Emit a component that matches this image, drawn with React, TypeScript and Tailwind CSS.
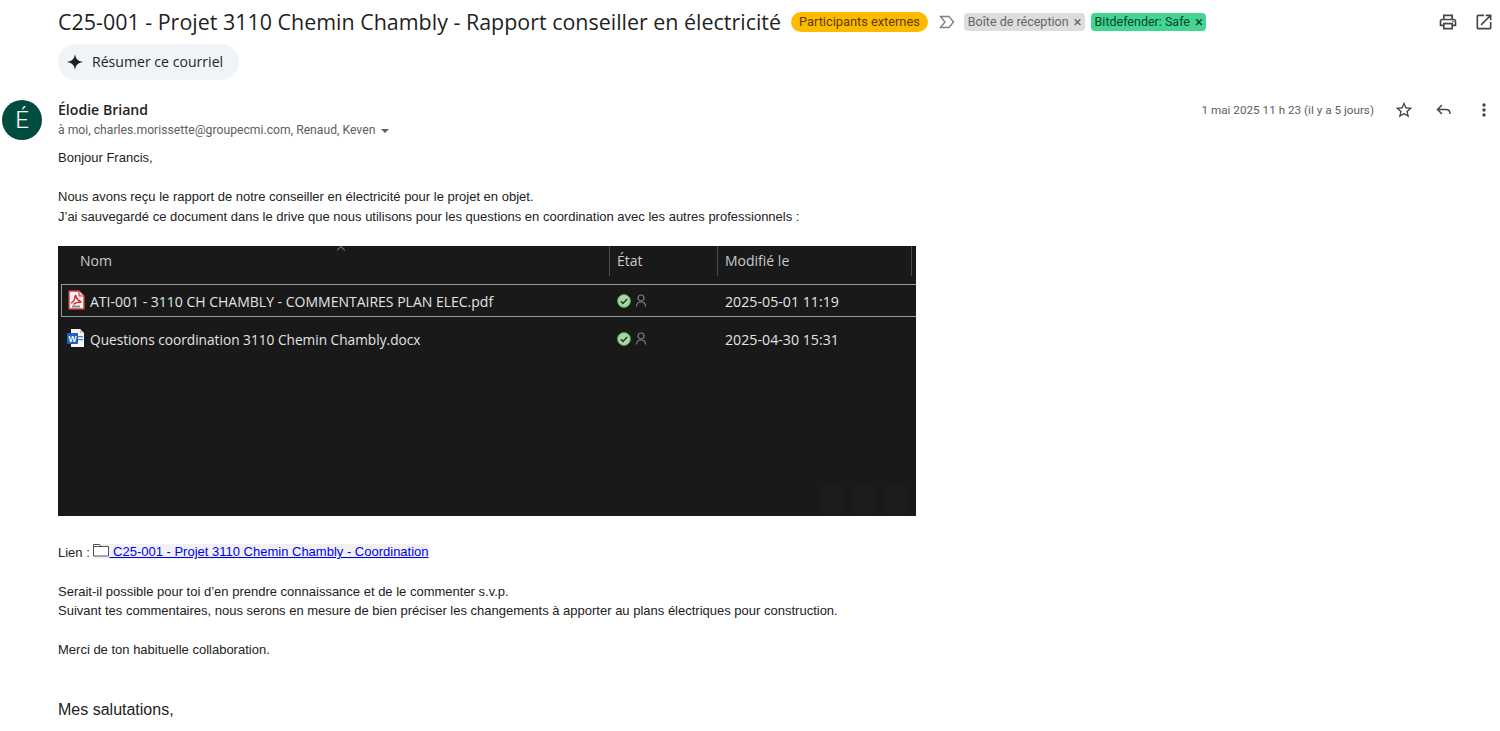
import { MdMoreVert, MdOpenInNew, MdOutlinePrint, MdStarBorder } from "react-icons/md";

function Label({ text, className }: { text: string; className: string }) {
  return (
    <span className={`inline-flex h-[18px] items-center rounded-[4px] pl-[4px] pr-[3px] text-[12.5px] leading-[18px] ${className}`}>
      {text}
      <span className="ml-[5px] text-[15px] leading-none">×</span>
    </span>
  );
}

function PdfIcon() {
  return (
    <svg width="17" height="20" viewBox="0 0 17 20">
      <path d="M1 1h10l5 5v13H1z" fill="#f5f5f5" stroke="#d23b3b" strokeWidth="1.4" />
      <path d="M11 1v5h5" fill="#f7c5c5" stroke="#d23b3b" strokeWidth="1" />
      <path d="M3 13c3-1 4-4 4.5-8 1 4 2.5 6 6 7-3 0-6 .5-8 2.5" fill="none" stroke="#d2282e" strokeWidth="1.5" />
      <rect x="4" y="15.5" width="8" height="2" fill="#8a8a8a" />
    </svg>
  );
}

function WordIcon() {
  return (
    <svg width="18" height="20" viewBox="0 0 18 20">
      <path d="M4 1h9l4 4v14H4z" fill="#f4f6f8" />
      <path d="M13 1v4h4" fill="#b9c6d6" />
      <rect x="11" y="8" width="5" height="1.3" fill="#4a86d0" />
      <rect x="11" y="11" width="5" height="1.3" fill="#4a86d0" />
      <rect x="0" y="5" width="11" height="11" rx="1" fill="#1f5fbd" />
      <text x="5.500" y="13.500" textAnchor="middle" fontSize="8.500" fontWeight="700" fill="#fff" fontFamily="'Liberation Sans', sans-serif">W</text>
    </svg>
  );
}

function SyncStatus() {
  return (
    <div className="flex items-center gap-[4px] pb-[2px]">
      <svg width="14" height="14" viewBox="0 0 14 14">
        <circle cx="7" cy="7" r="6.5" fill="#a9d6a9" stroke="#3f9c46" strokeWidth="1" />
        <path d="M3.8 7.2l2.2 2.2 4.2-4.4" fill="none" stroke="#1e3a20" strokeWidth="1.5" />
      </svg>
      <svg width="12" height="13" viewBox="0 0 12 13" fill="none" stroke="#808080" strokeWidth="1.2">
        <circle cx="6" cy="4" r="3" />
        <path d="M1.5 12.5c0-3 2-4.500 4.500-4.500s4.500 1.500 4.500 4.500" />
      </svg>
    </div>
  );
}

function FileRow({ icon, name, date, className, nameSize }: { icon: React.ReactNode; name: string; date: string; className: string; nameSize: string }) {
  return (
    <div className={`grid h-[33px] grid-cols-[549px_114px_1fr] items-center text-[#e4e4e4] ${className}`}>
      <div className="flex items-center">
        <div className="flex w-[28px] justify-center pb-[3px]">{icon}</div>
        <span className={nameSize}>{name}</span>
      </div>
      <div className="pl-[6px]">
        <SyncStatus />
      </div>
      <span className="text-[14.2px]">{date}</span>
    </div>
  );
}

export default function App() {
  return (
    <div className="h-[731px] overflow-hidden bg-white font-['Liberation_Sans',sans-serif] text-[#222]">
      {/* Subject */}
      <div className="flex h-[44px] items-center pl-[58px] pr-[6px]">
        <h1 className="font-['Open_Sans',sans-serif] text-[21.44px] leading-[28px] text-[#1f1f1f]">
          C25-001 - Projet 3110 Chemin Chambly - Rapport conseiller en électricité
        </h1>
        <span className="ml-[10px] flex h-[20px] items-center rounded-full bg-[#fdbb00] px-[8px] font-['Roboto',sans-serif] text-[12.8px] text-[#5c3c00]">
          Participants externes
        </span>
        <svg className="ml-[11px]" width="16" height="14" viewBox="0 0 16 14" fill="none" stroke="#808080" strokeWidth="1.4">
          <path d="M1.500 1.500h8.500l4.500 5.500-4.500 5.500H1.500l4.500-5.500z" />
        </svg>
        <div className="ml-[9px] flex items-center gap-[6px] font-['Roboto',sans-serif]">
          <Label text="Boîte de réception" className="bg-[#dddddd] text-[#666666]" />
          <Label text="Bitdefender: Safe" className="bg-[#42d692] text-[#094228]" />
        </div>
        <div className="ml-auto flex items-center gap-[16px] text-[#444746]">
          <MdOutlinePrint size={20} />
          <MdOpenInNew size={20} />
        </div>
      </div>

      <div className="pl-[58px]">
        <button className="flex h-[36px] w-[181px] items-center gap-[9px] rounded-full bg-[#f0f4f9] pl-[9px] font-['Open_Sans',sans-serif] text-[14.1px] text-[#1f1f1f]">
          <svg width="16" height="16" viewBox="0 0 16 16" fill="#1f1f1f">
            <path d="M8 0c.6 4.600 2.400 6.900 8 8-5.600 1.100-7.400 3.400-8 8-.6-4.600-2.400-6.900-8-8 5.600-1.100 7.400-3.400 8-8z" />
          </svg>
          Résumer ce courriel
        </button>
      </div>

      {/* Message */}
      <div className="mt-[20px] flex">
        <div className="ml-[2px] mr-[16px] flex h-[40px] w-[40px] shrink-0 items-center justify-center rounded-full bg-[#004d40] font-['Roboto',sans-serif] text-[24px] font-light text-white">
          É
        </div>
        <div className="min-w-0 flex-1">
          <div className="flex h-[20px] items-center font-['Roboto',sans-serif]">
            <span className="font-['Open_Sans',sans-serif] text-[14.1px] font-semibold text-[#1f1f1f]">Élodie Briand</span>
            <span className="ml-auto pt-[1px] text-[11.73px] text-[#5e5e5e]">1 mai 2025 11 h 23 (il y a 5 jours)</span>
            <div className="ml-[20px] mr-[6px] flex items-center gap-[20px] text-[#444746]">
              <MdStarBorder size={20} />
              <svg width="20" height="20" viewBox="0 0 20 20" fill="none" stroke="#444746" strokeWidth="1.500">
                <path d="M8 5L3.500 9.500 8 14M3.500 9.500H12c2.500 0 4 1.500 4 4.500" />
              </svg>
              <MdMoreVert size={20} />
            </div>
          </div>
          <div className="mt-[1px] flex h-[18px] items-center font-['Roboto',sans-serif] text-[12.2px] text-[#5e5e5e]">
            à moi, charles.morissette@groupecmi.com, Renaud, Keven
            <span className="ml-[6px] mt-[1px] h-0 w-0 border-x-[4px] border-t-[4px] border-x-transparent border-t-[#5e5e5e]" />
          </div>

          <div className="mt-[9px] text-[13px] leading-[19.5px] text-[#222]">
            <p>Bonjour Francis,</p>
            <p className="mt-[19.5px]">Nous avons reçu le rapport de notre conseiller en électricité pour le projet en objet.</p>
            <p>J’ai sauvegardé ce document dans le drive que nous utilisons pour les questions en coordination avec les autres professionnels :</p>

            {/* Screenshot of the drive folder */}
            <div className="relative mt-[20px] flex h-[270px] w-[858px] flex-col overflow-hidden bg-[#191919] font-['Open_Sans',sans-serif]">
              <span className="absolute left-[280px] top-[1px] h-[6px] w-[6px] rotate-45 border-l border-t border-[#777]" />
              <div className="grid h-[30px] grid-cols-[551px_108px_195px] text-[14px] leading-[30px] text-[#c9c9c9]">
                <span className="pl-[22px]">Nom</span>
                <span className="border-l border-[#4a4a4a] pl-[7px]">État</span>
                <span className="border-x border-[#4a4a4a] pl-[7px]">Modifié le</span>
              </div>
              <FileRow
                icon={<PdfIcon />}
                name="ATI-001 - 3110 CH CHAMBLY - COMMENTAIRES PLAN ELEC.pdf"
                nameSize="text-[14px]"
                date="2025-05-01 11:19"
                className="ml-[3px] mt-[8px] border border-r-0 border-[#9b9b9b] pt-[2px]"
              />
              <FileRow
                icon={<WordIcon />}
                name="Questions coordination 3110 Chemin Chambly.docx"
                nameSize="text-[13.68px]"
                date="2025-04-30 15:31"
                className="ml-[4px] mt-[6px]"
              />
              <div className="ml-auto mr-[8px] mt-[130px] flex gap-[7px]">
                <div className="h-[30px] w-[25px] bg-[#1b1d1c]" />
                <div className="h-[30px] w-[25px] bg-[#1b1d1c]" />
                <div className="h-[30px] w-[25px] bg-[#1b1d1c]" />
              </div>
            </div>

            <p className="mt-[27px] flex h-[19.5px] items-center">
              Lien :&nbsp;
              <a href="#" className="mb-[2px] flex h-[15px] items-center bg-[#f1f1f1] text-[#0000ee] underline">
                <svg className="-mt-[3px]" width="16" height="14" viewBox="0 0 16 14" fill="#fff" stroke="#555" strokeWidth="1">
                  <path d="M.5 13V1.500h6l1.500 2h7.500V13z" />
                  <path d="M.5 3.500H8" />
                </svg>
                &nbsp;C25-001 - Projet 3110 Chemin Chambly - Coordination
              </a>
            </p>
            <p className="mt-[19px]">Serait-il possible pour toi d’en prendre connaissance et de le commenter s.v.p.</p>
            <p>Suivant tes commentaires, nous serons en mesure de bien préciser les changements à apporter au plans électriques pour construction.</p>
            <p className="mt-[19.5px]">Merci de ton habituelle collaboration.</p>
            <p className="mt-[38px] text-[16px] leading-[24px]">Mes salutations,</p>
          </div>
        </div>
      </div>
    </div>
  );
}
